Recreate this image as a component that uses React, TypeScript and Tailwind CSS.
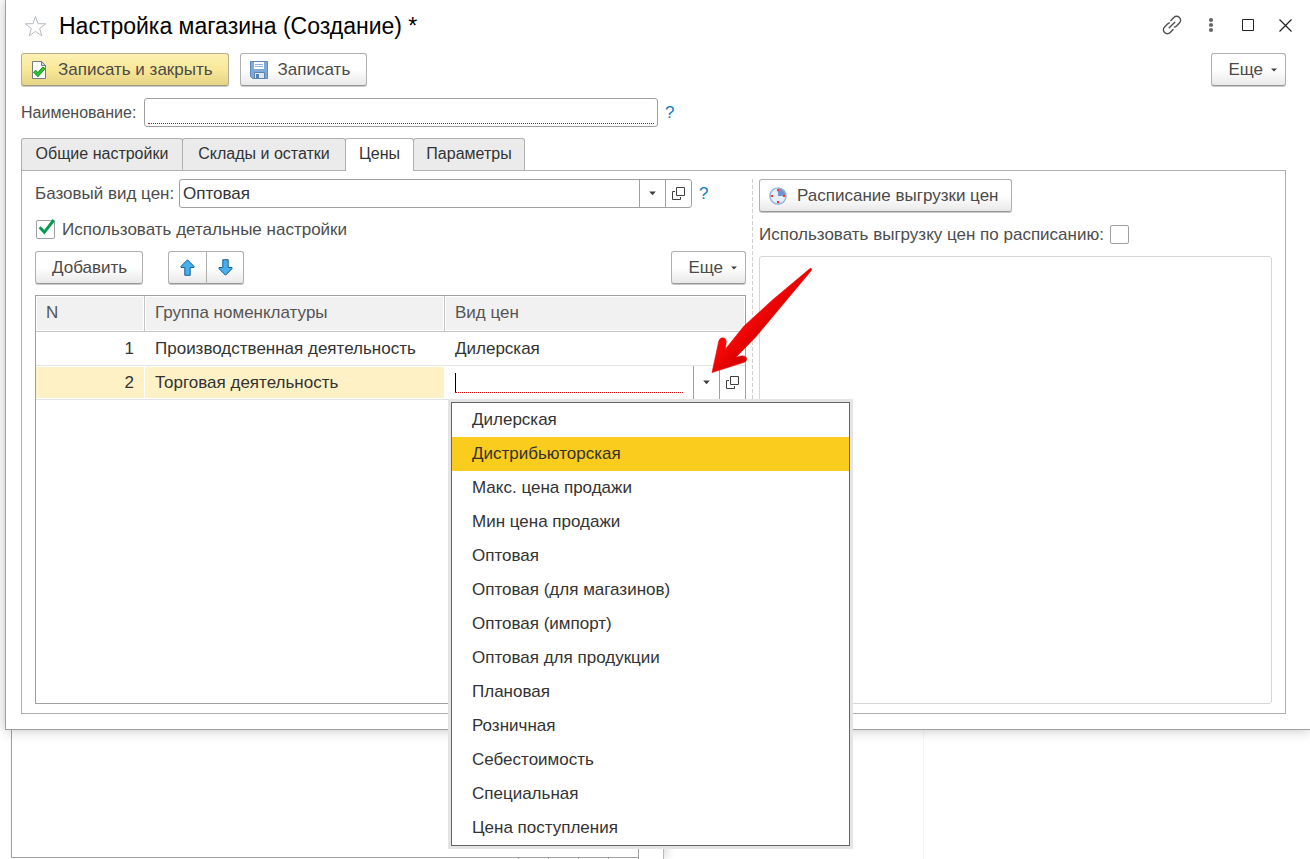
import { useState } from "react";
import type { ReactNode } from "react";

const priceTypes = [
  "Дилерская",
  "Дистрибьюторская",
  "Макс. цена продажи",
  "Мин цена продажи",
  "Оптовая",
  "Оптовая (для магазинов)",
  "Оптовая (импорт)",
  "Оптовая для продукции",
  "Плановая",
  "Розничная",
  "Себестоимость",
  "Специальная",
  "Цена поступления",
];

const tabs = [
  { title: "Общие настройки", width: "w-[162px]" },
  { title: "Склады и остатки", width: "w-[164px]" },
  { title: "Цены", width: "w-[69px]" },
  { title: "Параметры", width: "w-[112px]" },
];

function Caret({ small }: { small?: boolean }) {
  return small ? (
    <svg width="6" height="4" viewBox="0 0 6 4" aria-hidden="true">
      <path d="M0 0.5h6L3 3.6z" fill="#404040" />
    </svg>
  ) : (
    <svg width="7" height="5" viewBox="0 0 7 5" aria-hidden="true">
      <path d="M0.2 0.5h6.6L3.5 4.3z" fill="#404040" />
    </svg>
  );
}

function OpenIcon() {
  return (
    <svg width="13" height="13" viewBox="0 0 13 13" fill="none" stroke="#404040" aria-hidden="true">
      <path d="M4.5 0.5h8v8h-8z" />
      <path d="M3 4.5H0.5v8h8V10" />
    </svg>
  );
}

function PageCheckIcon() {
  return (
    <svg width="18" height="20" viewBox="0 0 18 20" aria-hidden="true">
      <path d="M2.5 1.5h9l4 4v13h-13z" fill="#fff" stroke="#707d88" />
      <path d="M11.5 1.5v4h4z" fill="#d4dbe2" stroke="#707d88" strokeLinejoin="round" />
      <path d="M3.5 12.2l2.3-2 2 2.4 5-5.6 2.3 1.7-7.2 8.1z" fill="#2fc32f" stroke="#0d8a17" strokeWidth="0.9" />
    </svg>
  );
}

function DiskIcon() {
  return (
    <svg width="18" height="18" viewBox="0 0 18 18" aria-hidden="true">
      <path d="M0.5 0.5h17v17H2.5l-2-2z" fill="#7fa9d9" stroke="#5f88bc" />
      <path d="M4 1h10v7H4z" fill="#fff" />
      <path d="M5 3.5h8M5 5.5h8" stroke="#8fb3de" />
      <path d="M4.5 11.5h10v6h-10z" fill="#dfe6ee" stroke="#5f7fa8" />
      <path d="M6 13h3v4H6z" fill="#5580b4" />
    </svg>
  );
}

function ClockIcon() {
  return (
    <svg width="18" height="18" viewBox="0 0 18 18" aria-hidden="true">
      <circle cx="9" cy="9" r="8.1" fill="#e3effc" stroke="#8eaedb" strokeWidth="1.3" />
      <path d="M9 9V1.5a7.5 7.5 0 0 1 7.5 7.5z" fill="#6f95cc" />
      <path d="M9 2v2.2M9 14v2.2M1.8 9h2.2M14 9h2.2" stroke="#ff3a20" strokeWidth="2" />
    </svg>
  );
}

function MoveArrow({ down }: { down?: boolean }) {
  return (
    <svg width="15" height="17" viewBox="0 0 15 17" className={down ? "rotate-180" : ""} aria-hidden="true">
      <path
        d="M7.5 0.8L14 7.3v1.2h-3.8v7.8H4.8V8.5H1V7.3z"
        fill="#44b0f0"
        stroke="#175f94"
        strokeLinejoin="round"
      />
    </svg>
  );
}

function StarIcon() {
  return (
    <svg width="23" height="22" viewBox="0 0 23 22" fill="none" stroke="#b4bac0" aria-hidden="true">
      <path d="M11.5 1.5l2.5 7.2 7.7.1-6.1 4.7 2.2 7.3-6.3-4.3-6.3 4.3 2.2-7.3L1.3 8.8l7.7-.1z" />
    </svg>
  );
}

function LinkIcon() {
  return (
    <svg
      width="20"
      height="20"
      viewBox="0 0 20 20"
      fill="none"
      stroke="#505050"
      strokeWidth="1.4"
      strokeLinecap="round"
      aria-hidden="true"
    >
      <path d="M7.2 12.8l5.6-5.6" />
      <path d="M8.9 5.4l2.9-2.9a3.9 3.9 0 0 1 5.6 0a3.9 3.9 0 0 1 0 5.6l-2.9 2.9c-.6.5-1.1.8-1.8 1" />
      <path d="M11.1 14.6l-2.9 2.9a3.9 3.9 0 0 1-5.6 0a3.9 3.9 0 0 1 0-5.6l2.9-2.9c.6-.5 1.1-.8 1.8-1" />
    </svg>
  );
}

function PointerArrow() {
  return (
    <svg
      width="104"
      height="108"
      viewBox="0 0 104 108"
      className="pointer-events-none absolute -right-[70px] -top-[100px] z-20"
      aria-hidden="true"
    >
      <defs>
        <linearGradient id="pointer" x1="0" y1="0" x2="1" y2="1">
          <stop offset="0.44" stopColor="#f60606" />
          <stop offset="0.56" stopColor="#dc0000" />
        </linearGradient>
      </defs>
      <path
        d="M100.5 4.2L44.5 71.2L25 91.2L30.500 90C36.5 89 37.5 95 32.5 96.5L1 106.500L7.800 75C9.2 70.300 15.500 71 15.2 76L14.5 83L32.800 60.200L62 33.500L99 2.5C100 2 101 3 100.5 4.2Z"
        fill="url(#pointer)"
        stroke="url(#pointer)"
        strokeWidth="0.6"
      />
    </svg>
  );
}

function Button({ children, primary, className = "" }: { children: ReactNode; primary?: boolean; className?: string }) {
  const tone = primary
    ? "border-[#b5ae90] border-b-[#a09a80] bg-linear-to-b from-[#fdf1b4] via-[#f9e898] to-[#e6d486]"
    : "border-[#b0b0b0] border-b-[#989898] bg-linear-to-b from-white from-50% to-[#e9e9e9]";
  return (
    <button
      type="button"
      className={`mb-px flex h-[33px] items-center rounded-[3px] border whitespace-nowrap text-[#4a4a4a] shadow-[0_1px_0_#c8c8c8] ${tone} ${className}`}
    >
      {children}
    </button>
  );
}

function Help() {
  return (
    <a href="#help" className="ml-[7px] text-[#0f7cc4]">
      ?
    </a>
  );
}

function PriceEditor() {
  return (
    <div className="relative flex h-[33px]">
      <div className="relative flex flex-1 px-[10px] pt-1 pb-[6px]">
        <input
          aria-label="Вид цен"
          className="w-full min-w-0 border-b border-dotted border-[#d01010] bg-transparent outline-none"
        />
        <span className="absolute top-[7px] left-[10px] h-[19px] w-px bg-black" />
      </div>
      <button
        type="button"
        aria-label="Выбрать из списка"
        className="flex w-[26px] items-center justify-center border-l border-[#a0a0a0]"
      >
        <Caret />
      </button>
      <button
        type="button"
        aria-label="Открыть"
        className="flex w-[26px] items-center justify-center border-l border-[#a0a0a0]"
      >
        <OpenIcon />
      </button>
      <PointerArrow />
      <ul
        role="listbox"
        aria-label="Вид цен"
        className="absolute top-full left-[6px] z-10 mt-[3px] w-[399px] border border-[#666] bg-white shadow-[0_0_0_3px_#e4e4e4]"
      >
        {priceTypes.map((name) => (
          <li
            key={name}
            role="option"
            aria-selected={name === "Дистрибьюторская"}
            className="flex h-[34px] items-center px-5 text-[#333] aria-selected:bg-[#facc1e]"
          >
            {name}
          </li>
        ))}
      </ul>
    </div>
  );
}

function HeaderCell({ children, last }: { children: ReactNode; last?: boolean }) {
  return (
    <th className={`border-b border-[#c4c4c4] p-px text-left font-normal ${last ? "" : "border-r"}`}>
      <div className="flex h-[33px] items-center bg-[#f1f1f1] px-[9px] pb-[2px] text-[#555]">{children}</div>
    </th>
  );
}

function PriceTable() {
  return (
    <div className="min-h-[409px] flex-1 border border-[#a0a0a0]">
      <table className="w-full table-fixed border-separate border-spacing-0 text-[#333]">
        <colgroup>
          <col className="w-[109px]" />
          <col />
          <col />
        </colgroup>
        <thead>
          <tr>
            <HeaderCell>N</HeaderCell>
            <HeaderCell>Группа номенклатуры</HeaderCell>
            <HeaderCell last>Вид цен</HeaderCell>
          </tr>
        </thead>
        <tbody>
          <tr>
            <td className="h-[34px] border-b border-[#e4e4e4] p-0 pr-[11px] text-right">1</td>
            <td className="border-b border-[#e4e4e4] p-0 px-[10px]">Производственная деятельность</td>
            <td className="border-b border-[#e4e4e4] p-0 px-[10px]">Дилерская</td>
          </tr>
          <tr>
            <td className="border-b border-[#e4e4e4] p-0 py-px pr-px">
              <div className="flex h-[31px] items-center justify-end bg-[#fef1c6] pr-[10px]">2</div>
            </td>
            <td className="border-b border-[#e4e4e4] p-0 py-px pr-px">
              <div className="flex h-[31px] items-center bg-[#fef1c6] px-[10px]">Торговая деятельность</div>
            </td>
            <td className="border-b border-[#e4e4e4] p-0">
              <PriceEditor />
            </td>
          </tr>
        </tbody>
      </table>
    </div>
  );
}

function BasePriceField() {
  return (
    <div className="flex items-center">
      <label htmlFor="base-price" className="w-[144px] whitespace-nowrap text-[#4d4d4d]">
        Базовый вид цен:
      </label>
      <div className="flex h-[29px] flex-1 rounded-[3px] border border-[#a0a0a0]">
        <input
          id="base-price"
          defaultValue="Оптовая"
          className="min-w-0 flex-1 bg-transparent px-[3px] text-[#333] outline-none"
        />
        <button
          type="button"
          aria-label="Выбрать вид цен"
          className="flex w-[26px] items-center justify-center border-l border-[#a0a0a0]"
        >
          <Caret />
        </button>
        <button
          type="button"
          aria-label="Открыть вид цен"
          className="flex w-[26px] items-center justify-center border-l border-[#a0a0a0]"
        >
          <OpenIcon />
        </button>
      </div>
      <div className="w-[54px]">
        <Help />
      </div>
    </div>
  );
}

function PricesPanel() {
  const [detailed, setDetailed] = useState(true);
  const [scheduled, setScheduled] = useState(false);
  return (
    <div className="flex border border-[#b0b0b0] px-[13px] pt-2 pb-[9px]">
      <div className="flex flex-[711] flex-col">
        <BasePriceField />
        <label className="mt-3 flex h-[19px] items-center gap-[7px] pl-px text-[#4d4d4d]">
          <span className="relative flex h-[19px] w-[19px]">
            <input
              type="checkbox"
              checked={detailed}
              onChange={(e) => setDetailed(e.target.checked)}
              className="h-[19px] w-[19px] appearance-none rounded-[2px] border border-[#a0a0a0] bg-white"
            />
            {detailed && (
              <svg width="19" height="19" viewBox="0 0 19 19" className="pointer-events-none absolute -top-px left-0">
                <path d="M3.7 8.3L8.3 13.3L17.8 1" fill="none" stroke="#079b50" strokeWidth="3" />
              </svg>
            )}
          </span>
          Использовать детальные настройки
        </label>
        <div className="mt-3 mb-[10px] flex">
          <Button className="pr-[15px] pl-4">Добавить</Button>
          <div className="ml-[25px] flex">
            <Button className="w-[39px] justify-center rounded-r-none">
              <MoveArrow />
            </Button>
            <Button className="-ml-px w-[38px] justify-center rounded-l-none">
              <MoveArrow down />
            </Button>
          </div>
          <Button className="ml-auto gap-2 pr-2 pl-4">
            Еще <Caret small />
          </Button>
        </div>
        <PriceTable />
      </div>
      <div className="mx-[6px] w-px bg-[repeating-linear-gradient(to_bottom,#d0d0d0_0_4px,transparent_4px_6px)]" />
      <div className="flex flex-[513] flex-col items-start">
        <Button className="gap-[10px] pr-3 pl-[9px]">
          <ClockIcon />
          Расписание выгрузки цен
        </Button>
        <label className="my-3 flex h-[19px] items-center gap-[6px] whitespace-nowrap text-[#4d4d4d]">
          Использовать выгрузку цен по расписанию:
          <input
            type="checkbox"
            checked={scheduled}
            onChange={(e) => setScheduled(e.target.checked)}
            className="h-[19px] w-[19px] appearance-none rounded-[2px] border border-[#a0a0a0] bg-white checked:bg-[#079b50]"
          />
        </label>
        <div className="w-full flex-1 rounded-[3px] border border-[#d6d6d6]" />
      </div>
    </div>
  );
}

function TitleBar() {
  return (
    <header className="flex h-[53px] items-center pr-[10px] pb-[2px] pl-[18px]">
      <button type="button" aria-label="Добавить в избранное">
        <StarIcon />
      </button>
      <h1 className="ml-3 text-[23px] text-black">Настройка магазина (Создание) *</h1>
      <div className="ml-auto flex items-center pb-px">
        <button type="button" aria-label="Получить ссылку" className="mr-[26px]">
          <LinkIcon />
        </button>
        <button type="button" aria-label="Меню" className="mr-[28px]">
          <svg width="6" height="16" viewBox="0 0 6 16" fill="#666" aria-hidden="true">
            <circle cx="3" cy="3" r="2.1" />
            <circle cx="3" cy="8" r="2.1" />
            <circle cx="3" cy="13" r="2.1" />
          </svg>
        </button>
        <button type="button" aria-label="Развернуть" className="mr-[25px]">
          <svg width="12" height="12" viewBox="0 0 12 12" fill="none" stroke="#222" aria-hidden="true">
            <path d="M0.5 0.5h11v11h-11z" />
          </svg>
        </button>
        <button type="button" aria-label="Закрыть" className="mr-2">
          <svg width="13" height="13" viewBox="0 0 13 13" stroke="#222" strokeWidth="1.2" aria-hidden="true">
            <path d="M0.5 0.5l12 12M12.5 0.5l-12 12" />
          </svg>
        </button>
      </div>
    </header>
  );
}

export default function App() {
  const [active, setActive] = useState("Цены");
  return (
    <div className="flex min-h-screen flex-col overflow-hidden bg-white font-['Liberation_Sans',Arial,sans-serif] text-[17px] leading-5">
      <main className="relative z-10 ml-[5px] border-b border-l border-[#a0a0a0] bg-white pb-[15px] shadow-[0_0_12px_rgba(0,0,0,0.25)]">
        <TitleBar />
        <div className="flex flex-col gap-[11px] pr-6 pl-[15px]">
          <div className="flex gap-[11px]">
            <Button primary className="gap-[10px] pr-[15px] pl-2">
              <PageCheckIcon />
              Записать и закрыть
            </Button>
            <Button className="gap-[10px] pr-4 pl-[9px]">
              <DiskIcon />
              Записать
            </Button>
            <Button className="ml-auto gap-2 pr-2 pl-4">
              Еще <Caret small />
            </Button>
          </div>
          <div className="flex items-center">
            <label htmlFor="name" className="w-[123px] text-base leading-5 text-[#4d4d4d]">
              Наименование:
            </label>
            <div className="flex h-[29px] w-[514px] rounded-[3px] border border-[#a0a0a0] px-[3px] pb-[2px]">
              <input
                id="name"
                className="w-full border-b border-dotted border-[#d01010] bg-transparent outline-none"
              />
            </div>
            <Help />
          </div>
          <div>
            <div role="tablist" className="flex">
              {tabs.map(({ title, width }) => (
                <button
                  key={title}
                  type="button"
                  role="tab"
                  aria-selected={title === active}
                  onClick={() => setActive(title)}
                  className={`-mr-px h-8 rounded-t-[3px] border border-b-0 border-[#b0b0b0] bg-[#ebebeb] pb-px text-base leading-5 whitespace-nowrap text-[#333] aria-selected:relative aria-selected:-mb-px aria-selected:h-[33px] aria-selected:bg-white aria-selected:pb-[2px] ${width}`}
                >
                  {title}
                </button>
              ))}
            </div>
            <PricesPanel />
          </div>
        </div>
      </main>
      <div className="flex flex-1">
        <div className="ml-[11px] flex w-[653px] border-r border-[#c8bc78] shadow-[4px_0_8px_rgba(0,0,0,0.12)]">
          <div className="flex w-[628px] flex-col border-r border-[#a0a0a0]">
            <div className="min-h-[128px] flex-1 border-b border-l border-[#a0a0a0]" />
            <div className="flex h-px justify-end">
              <span className="w-[30px] border-l border-[#a0a0a0]" />
              <span className="w-[30px] border-l border-[#a0a0a0]" />
              <span className="w-[30px] border-l border-[#a0a0a0]" />
              <span className="w-[30px] border-l border-[#a0a0a0]" />
            </div>
          </div>
        </div>
        <div className="w-[260px] border-r border-[#f6f6f6]" />
      </div>
    </div>
  );
}
